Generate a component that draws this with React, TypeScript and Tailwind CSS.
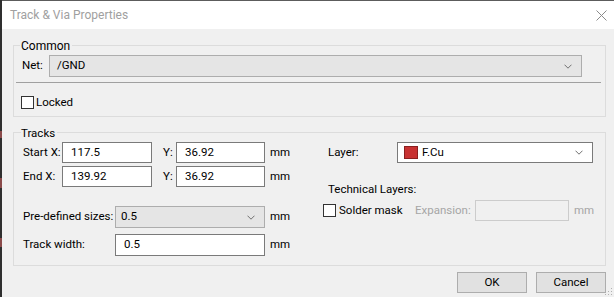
import React from "react";

function Chevron({ color = "#707070" }: { color?: string }) {
  return (
    <svg width="8" height="5" viewBox="0 0 8 5" className="shrink-0">
      <path d="M0.5 0.7 L4 4.2 L7.5 0.7" fill="none" stroke={color} strokeWidth="1" />
    </svg>
  );
}

function Checkbox() {
  return <div className="w-[13px] h-[13px] bg-white border border-[#333333] shrink-0" />;
}

function TextInput({ value, w, h = 21 }: { value: string; w: number; h?: number }) {
  return (
    <div
      className="bg-white border border-[#7a7a7a] flex items-center pl-[8px] shrink-0"
      style={{ width: w, height: h }}
    >
      {value}
    </div>
  );
}

export default function App() {
  return (
    <div className="w-[614px] h-[297px] flex overflow-hidden font-['Roboto',sans-serif] text-[11.5px] text-black">
      {/* window left border */}
      <div className="w-[2px] h-full flex flex-col bg-[#2f2f2f]">
        <div className="h-[131px]" />
        <div className="h-[7px] bg-[#8a4a4a]" />
        <div className="h-[40px]" />
        <div className="h-[10px] bg-[#8a4a4a]" />
        <div className="h-[50px]" />
        <div className="h-[9px] bg-[#8a4a4a]" />
      </div>
      <div className="flex-1 flex flex-col border-t border-[#5c5c5c]">
        {/* title bar */}
        <div className="h-[28px] bg-white flex items-center justify-between pl-[8px] pr-[7px]">
          <span className="text-[#a0a0a0] text-[12px]">Track &amp; Via Properties</span>
          <svg width="11" height="11" viewBox="0 0 11 11">
            <path d="M0.5 0.5 L10.5 10.5 M10.5 0.5 L0.5 10.5" stroke="#8a8a8a" strokeWidth="1" />
          </svg>
        </div>
        {/* body */}
        <div className="flex-1 bg-[#f0f0f0] flex flex-col relative">
          {/* Common group */}
          <div className="relative mt-[16px] ml-[11px] w-[593px] h-[72px] border border-[#dcdcdc] flex flex-col pt-[9px]">
            <span className="absolute left-[6px] top-[-7px] bg-[#f0f0f0] pr-[2px] pl-[1px] leading-[14px] text-[12px]">
              Common
            </span>
            <div className="flex items-center h-[22px]">
              <span className="w-[35px] pl-[8px]">Net:</span>
              <div className="w-[533px] h-[22px] bg-[#e5e5e5] border border-[#adadad] flex items-center justify-between pl-[7px] pr-[9px]">
                <span>/GND</span>
                <Chevron />
              </div>
            </div>
            <div className="ml-[2px] mt-[5px] w-[585px] border-t border-[#a0a0a0]" />
            <div className="flex items-center mt-[11px] ml-[7px] gap-[2px]">
              <Checkbox />
              <span>Locked</span>
            </div>
          </div>

          {/* Tracks group */}
          <div className="relative mt-[15px] ml-[11px] w-[593px] h-[134px] border border-[#dcdcdc] flex pt-[9px]">
            <span className="absolute left-[7px] top-[-7px] bg-[#f0f0f0] pr-[2px] leading-[14px]">
              Tracks
            </span>
            {/* left column */}
            <div className="w-[300px] flex flex-col">
              <div className="flex items-center h-[21px]">
                <span className="w-[48px] pl-[9px] shrink-0">Start X:</span>
                <TextInput value="117.5" w={90} />
                <span className="w-[24px] pl-[11px] shrink-0">Y:</span>
                <TextInput value="36.92" w={89} />
                <span className="ml-[5px]">mm</span>
              </div>
              <div className="flex items-center h-[21px] mt-[3px]">
                <span className="w-[48px] pl-[9px] shrink-0">End X:</span>
                <TextInput value="139.92" w={90} />
                <span className="w-[24px] pl-[11px] shrink-0">Y:</span>
                <TextInput value="36.92" w={89} />
                <span className="ml-[5px]">mm</span>
              </div>
              <div className="flex items-center h-[22px] mt-[19px]">
                <span className="w-[101px] pl-[9px] shrink-0">Pre-defined sizes:</span>
                <div className="w-[150px] h-[22px] bg-[#e5e5e5] border border-[#adadad] flex items-center justify-between pl-[5px] pr-[9px] shrink-0">
                  <span>0.5</span>
                  <Chevron />
                </div>
                <span className="ml-[5px]">mm</span>
              </div>
              <div className="flex items-center h-[22px] mt-[6px]">
                <span className="w-[101px] pl-[9px] shrink-0">Track width:</span>
                <TextInput value="0.5" w={150} h={22} />
                <span className="ml-[5px]">mm</span>
              </div>
            </div>
            {/* right column */}
            <div className="flex-1 flex flex-col">
              <div className="flex items-center h-[21px]">
                <span className="w-[83px] pl-[14px] shrink-0">Layer:</span>
                <div className="w-[196px] h-[21px] bg-white border border-[#7a7a7a] flex items-center justify-between pl-[6px] pr-[9px]">
                  <div className="flex items-center gap-[4px]">
                    <div className="w-[14px] h-[13px] bg-[#c83232] border border-[#8a2020]" />
                    <span>F.Cu</span>
                  </div>
                  <Chevron />
                </div>
              </div>
              <div className="mt-[19px] pl-[14px] leading-[14px]">Technical Layers:</div>
              <div className="flex items-center mt-[4px] h-[21px]">
                <div className="ml-[9px]">
                  <Checkbox />
                </div>
                <span className="ml-[3px] w-[76px] shrink-0">Solder mask</span>
                <span className="text-[#a6a6a6] w-[60px] shrink-0">Expansion:</span>
                <div className="w-[94px] h-[21px] bg-[#f0f0f0] border border-[#cccccc] shrink-0" />
                <span className="ml-[5px] text-[#a6a6a6]">mm</span>
              </div>
            </div>
          </div>

          {/* buttons */}
          <div className="flex justify-end gap-[9px] mt-[6px] pr-[8px]">
            <div className="w-[70px] h-[21px] bg-[#e1e1e1] border border-[#adadad] flex items-center justify-center">
              OK
            </div>
            <div className="w-[70px] h-[21px] bg-[#e1e1e1] border border-[#adadad] flex items-center justify-center">
              Cancel
            </div>
          </div>
          {/* resize grip */}
          <svg width="8" height="8" viewBox="0 0 8 8" className="absolute right-[1px] bottom-[1px]">
            <rect x="6" y="0" width="1" height="1" fill="#b0b0b0" />
            <rect x="3" y="3" width="1" height="1" fill="#b0b0b0" />
            <rect x="6" y="3" width="1" height="1" fill="#b0b0b0" />
            <rect x="0" y="6" width="1" height="1" fill="#b0b0b0" />
            <rect x="3" y="6" width="1" height="1" fill="#b0b0b0" />
            <rect x="6" y="6" width="1" height="1" fill="#b0b0b0" />
          </svg>
        </div>
      </div>
    </div>
  );
}
